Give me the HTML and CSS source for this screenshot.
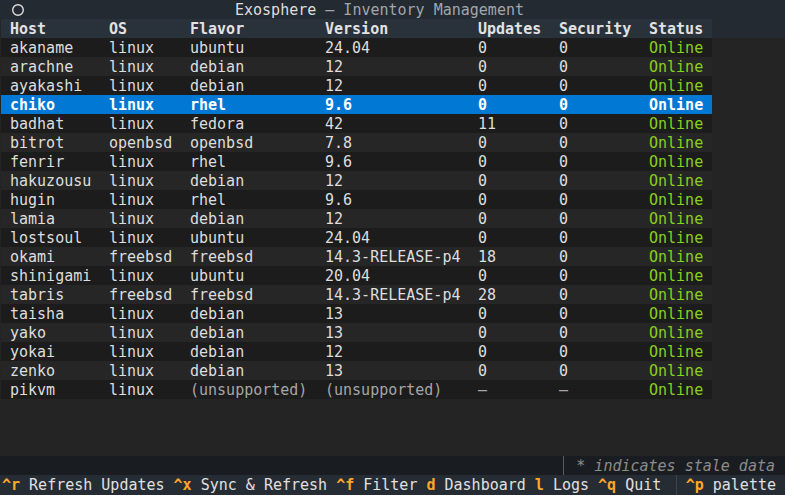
FILE: index.html
```html
<!DOCTYPE html>
<html>
<head>
<meta charset="utf-8">
<link rel="stylesheet" href="styles.css">
</head>
<body>
<div class="app">
  <header class="titlebar">
    <span class="icon"><svg width="14" height="14" viewBox="0 0 14 14"><circle cx="7" cy="7" r="5.3" fill="none" stroke="#e0e0e0" stroke-width="1.4"/></svg></span>
    <span class="title">Exosphere<span class="sub"> — Inventory Management</span></span>
  </header>
  <main class="table">
    <div class="row head"><span>Host</span><span>OS</span><span>Flavor</span><span>Version</span><span>Updates</span><span>Security</span><span>Status</span></div>
    <div class="rows">
      <div class="row"><span>akaname</span><span>linux</span><span>ubuntu</span><span>24.04</span><span>0</span><span>0</span><span class="ok">Online</span></div>
      <div class="row"><span>arachne</span><span>linux</span><span>debian</span><span>12</span><span>0</span><span>0</span><span class="ok">Online</span></div>
      <div class="row"><span>ayakashi</span><span>linux</span><span>debian</span><span>12</span><span>0</span><span>0</span><span class="ok">Online</span></div>
      <div class="row sel"><span>chiko</span><span>linux</span><span>rhel</span><span>9.6</span><span>0</span><span>0</span><span class="ok">Online</span></div>
      <div class="row"><span>badhat</span><span>linux</span><span>fedora</span><span>42</span><span>11</span><span>0</span><span class="ok">Online</span></div>
      <div class="row"><span>bitrot</span><span>openbsd</span><span>openbsd</span><span>7.8</span><span>0</span><span>0</span><span class="ok">Online</span></div>
      <div class="row"><span>fenrir</span><span>linux</span><span>rhel</span><span>9.6</span><span>0</span><span>0</span><span class="ok">Online</span></div>
      <div class="row"><span>hakuzousu</span><span>linux</span><span>debian</span><span>12</span><span>0</span><span>0</span><span class="ok">Online</span></div>
      <div class="row"><span>hugin</span><span>linux</span><span>rhel</span><span>9.6</span><span>0</span><span>0</span><span class="ok">Online</span></div>
      <div class="row"><span>lamia</span><span>linux</span><span>debian</span><span>12</span><span>0</span><span>0</span><span class="ok">Online</span></div>
      <div class="row"><span>lostsoul</span><span>linux</span><span>ubuntu</span><span>24.04</span><span>0</span><span>0</span><span class="ok">Online</span></div>
      <div class="row"><span>okami</span><span>freebsd</span><span>freebsd</span><span>14.3-RELEASE-p4</span><span>18</span><span>0</span><span class="ok">Online</span></div>
      <div class="row"><span>shinigami</span><span>linux</span><span>ubuntu</span><span>20.04</span><span>0</span><span>0</span><span class="ok">Online</span></div>
      <div class="row"><span>tabris</span><span>freebsd</span><span>freebsd</span><span>14.3-RELEASE-p4</span><span>28</span><span>0</span><span class="ok">Online</span></div>
      <div class="row"><span>taisha</span><span>linux</span><span>debian</span><span>13</span><span>0</span><span>0</span><span class="ok">Online</span></div>
      <div class="row"><span>yako</span><span>linux</span><span>debian</span><span>13</span><span>0</span><span>0</span><span class="ok">Online</span></div>
      <div class="row"><span>yokai</span><span>linux</span><span>debian</span><span>12</span><span>0</span><span>0</span><span class="ok">Online</span></div>
      <div class="row"><span>zenko</span><span>linux</span><span>debian</span><span>13</span><span>0</span><span>0</span><span class="ok">Online</span></div>
      <div class="row"><span>pikvm</span><span>linux</span><span class="dim">(unsupported)</span><span class="dim">(unsupported)</span><span class="dim">–</span><span class="dim">–</span><span class="ok">Online</span></div>
    </div>
  </main>
  <div class="stale"><span class="note">* indicates stale data</span></div>
  <footer class="footer">
    <div class="keys"><span class="k">^r</span> Refresh Updates <span class="k">^x</span> Sync &amp; Refresh <span class="k">^f</span> Filter <span class="k">d</span> Dashboard <span class="k">l</span> Logs <span class="k">^q</span> Quit</div>
    <div class="palette"><span class="k">^p</span> palette</div>
  </footer>
</div>
</body>
</html>
```

FILE: styles.css
```css
* { box-sizing: border-box; }
html, body {
  margin: 0;
  padding: 0;
  width: 785px;
  height: 495px;
  overflow: hidden;
  background: #1d2227;
}
.app {
  width: 785px;
  height: 495px;
  display: flex;
  flex-direction: column;
  font-family: "DejaVu Sans Mono", "Liberation Mono", monospace;
  font-size: 15px;
  line-height: 17px;
  color: #dedede;
}
.titlebar {
  height: 19px;
  flex: none;
  background: #232a31;
  display: grid;
  grid-template-columns: 235px 1fr;
  align-items: start;
  white-space: pre;
}
.icon {
  padding-left: 11px;
  height: 19px;
  display: flex;
  align-items: center;
}
.icon svg { display: block; }
.title { color: #dedede; padding-top: 2px; }
.title .sub { color: #a2a6aa; }
.table {
  flex: 1;
  background: #242424;
  padding-left: 1px;
  overflow: hidden;
}
.row {
  display: grid;
  grid-template-columns: 99px 81px 135px 153px 81px 90px 72px;
  width: 711px;
  height: 19px;
  white-space: pre;
}
.row > span {
  padding: 2px 9px 0;
}
.row.head {
  font-weight: bold;
  background: #29313a;
  color: #e2e2e2;
  box-shadow: 74px 0 0 #232a31;
}
.rows .row { background: #1c1c1c; }
.rows .row:nth-child(even) { background: #262626; }
.rows .row.sel { background: #0178d4; color: #ffffff; font-weight: bold; }
.ok { color: #88d01c; }
.rows .row.sel .ok { color: #ffffff; }
.dim { color: #a6a6a6; }
.stale {
  height: 19px;
  flex: none;
  background: #191d21;
  display: flex;
  justify-content: flex-end;
  white-space: pre;
}
.note {
  border-left: 1px solid #585c60;
  padding: 2px 10px 0 12px;
  font-style: italic;
  color: #8c8c8c;
}
.footer {
  height: 20px;
  flex: none;
  background: #252c34;
  display: flex;
  color: #e0e0e0;
  white-space: pre;
}
.keys {
  flex: 1;
  padding: 2px 0 0 2px;
}
.k { color: #ffa62b; font-weight: bold; }
.palette {
  border-left: 1px solid #3a444e;
  padding: 2px 9px 0;
}
```
